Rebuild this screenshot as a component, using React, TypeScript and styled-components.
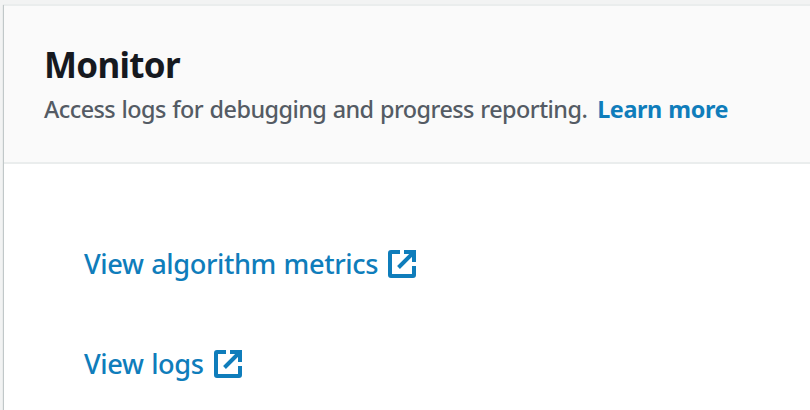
import React from "react";
import styled, { createGlobalStyle } from "styled-components";

const GlobalStyle = createGlobalStyle`
  * { box-sizing: border-box; }
  body { margin: 0; background: #f2f3f3; font-family: "Noto Sans", "Open Sans", sans-serif; }
`;

const Page = styled.main`
  height: 410px;
  padding: 4px 0 0 4px;
  overflow: hidden;
`;

const Panel = styled.section`
  height: 420px;
  background: #fff;
  border-top: 2px solid #eaeded;
  box-shadow: -1px 1px 1px rgba(0, 28, 36, 0.2);
`;

const Header = styled.header`
  height: 158px;
  padding: 36px 0 0 40px;
  background: #fafafa;
  border-bottom: 2px solid #eaeded;
`;

const Title = styled.h2`
  margin: 0;
  font-size: 35px;
  line-height: 46px;
  font-weight: 700;
  letter-spacing: -0.7px;
  color: #16191f;
`;

const Description = styled.p`
  margin: 3px 0 0;
  font-size: 23.4px;
  line-height: 36px;
  font-weight: 500;
  letter-spacing: -0.55px;
  word-spacing: 0.9px;
  color: #545b64;
  white-space: nowrap;
`;

const LearnMore = styled.a`
  margin-left: 10px;
  font-weight: 700;
  letter-spacing: -0.42px;
  color: #0f7dbb;
`;

const Links = styled.nav`
  display: flex;
  flex-direction: column;
  gap: 60px;
  padding: 80px 0 0 80px;
`;

const ExternalLink = styled.a`
  display: flex;
  align-items: center;
  gap: 10px;
  height: 40px;
  font-size: 27.2px;
  line-height: 40px;
  font-weight: 500;
  letter-spacing: -0.4px;
  word-spacing: 1px;
  color: #0f7dbb;
`;

const IconSvg = styled.svg`
  flex: none;
  width: 28px;
  height: 28px;
`;

const Icon = () => (
  <IconSvg viewBox="0 0 28 28" fill="none" stroke="currentColor" strokeWidth="4">
    <path d="M12 2H3Q2 2 2 3V25Q2 26 3 26H25Q26 26 26 25V16" />
    <path d="M16 2H26V12M26 2 10.5 17.5" />
  </IconSvg>
);

export default function App() {
  return (
    <>
      <GlobalStyle />
      <Page>
        <Panel>
          <Header>
            <Title>Monitor</Title>
            <Description>
              Access logs for debugging and progress reporting.
              <LearnMore>Learn more</LearnMore>
            </Description>
          </Header>
          <Links>
            <ExternalLink><span>View algorithm metrics</span><Icon /></ExternalLink>
            <ExternalLink><span>View logs</span><Icon /></ExternalLink>
          </Links>
        </Panel>
      </Page>
    </>
  );
}
